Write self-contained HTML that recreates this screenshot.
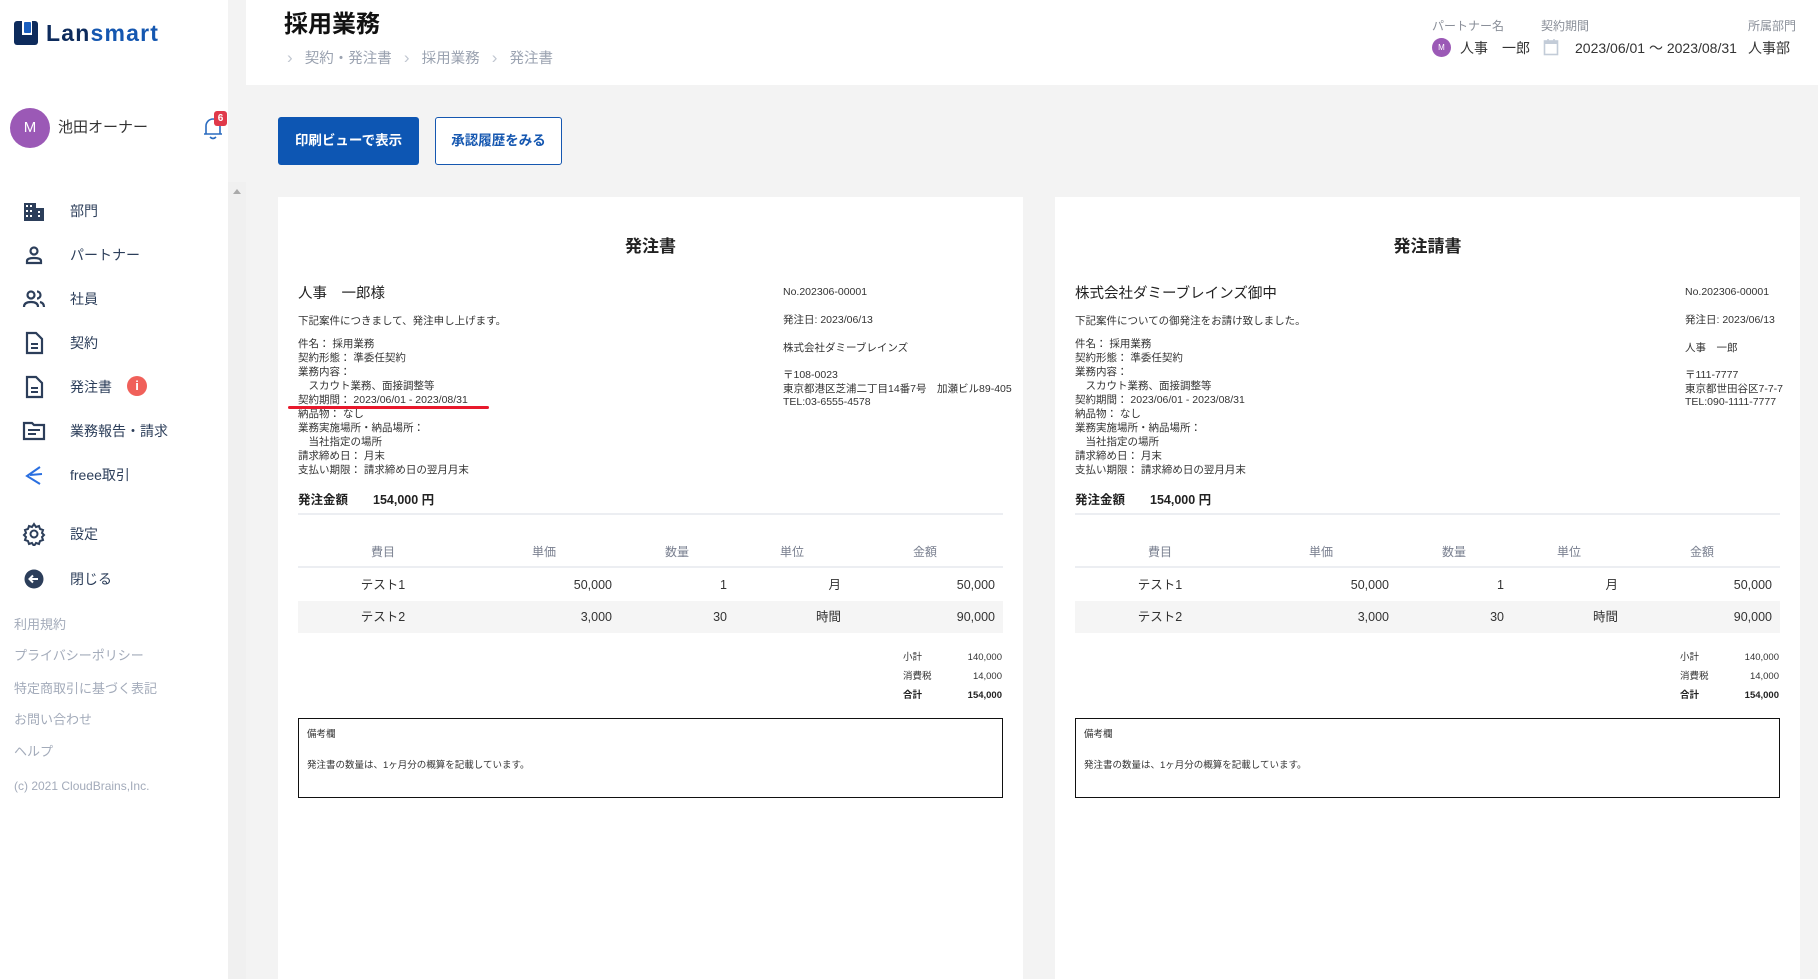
<!DOCTYPE html>
<html><head><meta charset="utf-8"><style>
*{margin:0;padding:0;box-sizing:border-box}
html{overflow:hidden;width:1818px;height:979px}
body{width:1818px;height:979px;overflow:hidden;background:#f3f3f3;font-family:"Liberation Sans","Noto Sans CJK JP",sans-serif;color:#222;position:relative}
.a{position:absolute;white-space:nowrap}
#side{position:absolute;left:0;top:0;width:228px;height:979px;background:#fff}
#sb{position:absolute;left:228px;top:182px;width:18px;height:797px;background:#f0f0f0}
#hdr{position:absolute;left:246px;top:0;width:1572px;height:85px;background:#fff}
.nav{position:absolute;left:70px;font-size:14px;color:#2c3e5a;line-height:20px}
.ico{position:absolute;left:22px;width:24px;height:24px}
.ft{position:absolute;left:14px;font-size:13px;color:#a3abba;line-height:18px}
.card{position:absolute;top:197px;width:745px;height:782px;background:#fff}
.card .a{line-height:16px}
.s{font-size:10.5px;color:#333}
.th{font-size:12px;color:#7a8090}
.td{font-size:12.5px;color:#333}
.ch{color:#c0c6d0;font-size:17px}
</style></head><body>
<div id="side">
 <div class="a" style="left:14px;top:21px;width:24px;height:24px;background:#0d2b5c;border-radius:3px"></div>
 <div class="a" style="left:22px;top:21px;width:10px;height:14px;background:#fff"></div>
 <div class="a" style="left:24px;top:22px;width:7px;height:11px;background:#1a5fc0;border-radius:1px"></div>
 <div class="a" style="left:46px;top:19px;font-size:23px;font-weight:bold;color:#0d2b5c;line-height:28px;letter-spacing:1.2px">Lan<span style="color:#1557b0">smart</span></div>
 <div class="a" style="left:10px;top:108px;width:40px;height:40px;border-radius:50%;background:#9b59b6;color:#fff;font-size:15px;line-height:40px;text-align:center">M</div>
 <div class="a" style="left:58px;top:118px;font-size:15px;color:#333;line-height:20px">池田オーナー</div>
 <svg class="a" style="left:202px;top:114px" width="22" height="28" viewBox="0 0 22 28"><path d="M4 20 V12 a7 7 0 0 1 14 0 V20 H4 Z M2 20 H20" fill="none" stroke="#2a6bbf" stroke-width="1.6"/><path d="M8 23 q3 3 6 0" fill="none" stroke="#2a6bbf" stroke-width="1.6"/></svg>
 <div class="a" style="left:214px;top:111px;width:13px;height:15px;background:#e0394a;border-radius:3px;color:#fff;font-size:10px;font-weight:bold;text-align:center;line-height:15px">6</div>

 <svg class="ico" style="top:200px" viewBox="0 0 24 24"><rect x="2" y="3" width="12" height="18" fill="#2c3e5a"/><rect x="14" y="8" width="8" height="13" fill="#2c3e5a"/><g fill="#fff"><rect x="4" y="5" width="2" height="2"/><rect x="8" y="5" width="2" height="2"/><rect x="4" y="10" width="2" height="2"/><rect x="8" y="10" width="2" height="2"/><rect x="4" y="15" width="2" height="2"/><rect x="8" y="15" width="2" height="2"/><rect x="16" y="11" width="2" height="2"/><rect x="16" y="15" width="2" height="2"/></g></svg>
 <div class="nav" style="top:201px">部門</div>
 <svg class="ico" style="top:243px" viewBox="0 0 24 24"><circle cx="12" cy="8" r="3.5" fill="none" stroke="#2c3e5a" stroke-width="2.2"/><path d="M5 20 v-2 q0-3 7-3 q7 0 7 3 v2 Z" fill="none" stroke="#2c3e5a" stroke-width="2.2"/></svg>
 <div class="nav" style="top:245px">パートナー</div>
 <svg class="ico" style="top:287px" viewBox="0 0 24 24"><circle cx="9" cy="8" r="3.5" fill="none" stroke="#2c3e5a" stroke-width="2.2"/><path d="M2 20 q0-5 7-5 q7 0 7 5" fill="none" stroke="#2c3e5a" stroke-width="2.2"/><path d="M15 4.5 a3.5 3.5 0 0 1 0 7 M18 15 q4 1 4 5" fill="none" stroke="#2c3e5a" stroke-width="2.2"/></svg>
 <div class="nav" style="top:289px">社員</div>
 <svg class="ico" style="top:331px" viewBox="0 0 24 24"><path d="M5 2 H14 L20 8 V22 H5 Z" fill="none" stroke="#2c3e5a" stroke-width="2.2"/><path d="M9 13 H16 M9 17 H16" stroke="#2c3e5a" stroke-width="2"/></svg>
 <div class="nav" style="top:333px">契約</div>
 <svg class="ico" style="top:375px" viewBox="0 0 24 24"><path d="M5 2 H14 L20 8 V22 H5 Z" fill="none" stroke="#2c3e5a" stroke-width="2.2"/><path d="M9 13 H16 M9 17 H16" stroke="#2c3e5a" stroke-width="2"/></svg>
 <div class="nav" style="top:377px">発注書</div>
 <div class="a" style="left:127px;top:376px;width:20px;height:20px;border-radius:50%;background:#f0605a;color:#fff;font-size:13px;font-weight:bold;text-align:center;line-height:20px">i</div>
 <svg class="ico" style="top:419px" viewBox="0 0 24 24"><path d="M2 4 H10 L12 6 H22 V20 H2 Z" fill="none" stroke="#2c3e5a" stroke-width="2.2"/><path d="M6 11 H18 M6 15 H14" stroke="#2c3e5a" stroke-width="2"/></svg>
 <div class="nav" style="top:421px">業務報告・請求</div>
 <svg class="ico" style="top:463px" viewBox="0 0 24 24"><path d="M18 4 L5 13 L18 21 M8 12 L20 11" fill="none" stroke="#2a6fe0" stroke-width="2"/></svg>
 <div class="nav" style="top:465px">freee取引</div>
 <svg class="ico" style="top:522px" viewBox="0 0 24 24"><circle cx="12" cy="12" r="3.5" fill="none" stroke="#2c3e5a" stroke-width="2"/><path d="M12 2 l2 3 3-1 1 3 3 1-1 3 2 2-2 2 1 3-3 1-1 3-3-1-2 3-2-3-3 1-1-3-3-1 1-3-2-2 2-2-1-3 3-1 1-3 3 1 Z" fill="none" stroke="#2c3e5a" stroke-width="2"/></svg>
 <div class="nav" style="top:524px">設定</div>
 <svg class="ico" style="top:567px" viewBox="0 0 24 24"><circle cx="12" cy="12" r="9.5" fill="#2c3e5a"/><path d="M16 12 H8 M11 8.5 L7.5 12 L11 15.5" fill="none" stroke="#fff" stroke-width="2"/></svg>
 <div class="nav" style="top:569px">閉じる</div>

 <div class="ft" style="top:616px">利用規約</div>
 <div class="ft" style="top:647px">プライバシーポリシー</div>
 <div class="ft" style="top:680px">特定商取引に基づく表記</div>
 <div class="ft" style="top:711px">お問い合わせ</div>
 <div class="ft" style="top:743px">ヘルプ</div>
 <div class="ft" style="top:777px;font-size:12px">(c) 2021 CloudBrains,Inc.</div>
</div>
<div id="sb"><div style="margin:7px auto 0;width:0;height:0;border-left:4px solid transparent;border-right:4px solid transparent;border-bottom:5px solid #aaa"></div></div>

<div id="hdr"></div>
<div class="a" style="left:284px;top:9px;font-size:24px;font-weight:bold;line-height:32px;color:#111">採用業務</div>
<div class="a" style="left:287px;top:48px;font-size:14.5px;line-height:20px;color:#9aa2b0"><span class="ch">›</span>&nbsp;&nbsp;&nbsp;契約・発注書&nbsp;&nbsp;&nbsp;<span class="ch">›</span>&nbsp;&nbsp;&nbsp;採用業務&nbsp;&nbsp;&nbsp;<span class="ch">›</span>&nbsp;&nbsp;&nbsp;発注書</div>

<div class="a" style="left:1432px;top:18px;font-size:12px;color:#8a8f99;line-height:16px">パートナー名</div>
<div class="a" style="left:1541px;top:18px;font-size:12px;color:#8a8f99;line-height:16px">契約期間</div>
<div class="a" style="left:1748px;top:18px;font-size:12px;color:#8a8f99;line-height:16px">所属部門</div>
<div class="a" style="left:1432px;top:38px;width:19px;height:19px;border-radius:50%;background:#9b59b6;color:#fff;font-size:8px;text-align:center;line-height:19px">M</div>
<div class="a" style="left:1460px;top:38px;font-size:14px;line-height:20px;color:#333">人事　一郎</div>
<svg class="a" style="left:1543px;top:38px" width="16" height="18" viewBox="0 0 16 18"><rect x="1.5" y="3" width="13" height="13.5" fill="none" stroke="#c3ccd8" stroke-width="1.6"/><rect x="1.5" y="3" width="13" height="3" fill="#c3ccd8"/><path d="M5 1 V4 M11 1 V4" stroke="#c3ccd8" stroke-width="1.6"/></svg>
<div class="a" style="left:1575px;top:38px;font-size:14px;line-height:20px;color:#333">2023/06/01 ～ 2023/08/31</div>
<div class="a" style="left:1748px;top:38px;font-size:14px;line-height:20px;color:#333">人事部</div>

<div class="a" style="left:278px;top:117px;width:141px;height:48px;background:#0d56b3;border-radius:3px;color:#fff;font-size:13.5px;font-weight:bold;text-align:center;line-height:48px">印刷ビューで表示</div>
<div class="a" style="left:435px;top:117px;width:127px;height:48px;background:#fff;border:1.5px solid #1557b0;border-radius:3px;color:#1557b0;font-size:13.5px;font-weight:bold;text-align:center;line-height:45px">承認履歴をみる</div>

<!-- CARD 1 -->
<div class="card" style="left:278px">
 <div class="a" style="left:0;width:745px;text-align:center;top:40px;font-size:17px;font-weight:bold;line-height:20px">発注書</div>
 <div class="a" style="left:20px;top:88px;font-size:14.5px;line-height:18px">人事　一郎様</div>
 <div class="a s" style="left:20px;top:116px">下記案件につきまして、発注申し上げます。</div>
 <div class="a s" style="left:20px;top:140px;line-height:14px;white-space:pre">件名： 採用業務
契約形態： 準委任契約
業務内容：
　スカウト業務、面接調整等
契約期間： 2023/06/01 - 2023/08/31
納品物： なし
業務実施場所・納品場所：
　当社指定の場所
請求締め日： 月末
支払い期限： 請求締め日の翌月月末</div>
 <div class="a" style="left:10px;top:209px;width:201px;height:3px;background:#e8192c;border-radius:2px"></div>
 <div class="a" style="left:20px;top:295px;font-size:12.5px;font-weight:bold">発注金額　　154,000 円</div>
 <div class="a" style="left:20px;top:316px;width:705px;height:2px;background:#eceef2"></div>
 <div class="a s" style="left:505px;top:87px">No.202306-00001</div>
 <div class="a s" style="left:505px;top:115px">発注日: 2023/06/13</div>
 <div class="a s" style="left:505px;top:143px">株式会社ダミーブレインズ</div>
 <div class="a s" style="left:505px;top:172px;line-height:13.5px;white-space:pre">〒108-0023
東京都港区芝浦二丁目14番7号　加瀬ビル89-405
TEL:03-6555-4578</div>
 <div class="a th" style="left:65px;width:80px;text-align:center;top:347px">費目</div>
 <div class="a th" style="left:226px;width:80px;text-align:center;top:347px">単価</div>
 <div class="a th" style="left:359px;width:80px;text-align:center;top:347px">数量</div>
 <div class="a th" style="left:474px;width:80px;text-align:center;top:347px">単位</div>
 <div class="a th" style="left:607px;width:80px;text-align:center;top:347px">金額</div>
 <div class="a" style="left:20px;top:369px;width:705px;height:2px;background:#eceef2"></div>
 <div class="a" style="left:20px;top:404px;width:705px;height:32px;background:#f5f5f5"></div>
 <div class="a td" style="left:65px;width:80px;text-align:center;top:380px">テスト1</div>
 <div class="a td" style="left:234px;width:100px;text-align:right;top:380px">50,000</div>
 <div class="a td" style="left:349px;width:100px;text-align:right;top:380px">1</div>
 <div class="a td" style="left:463px;width:100px;text-align:right;top:380px">月</div>
 <div class="a td" style="left:617px;width:100px;text-align:right;top:380px">50,000</div>
 <div class="a td" style="left:65px;width:80px;text-align:center;top:412px">テスト2</div>
 <div class="a td" style="left:234px;width:100px;text-align:right;top:412px">3,000</div>
 <div class="a td" style="left:349px;width:100px;text-align:right;top:412px">30</div>
 <div class="a td" style="left:463px;width:100px;text-align:right;top:412px">時間</div>
 <div class="a td" style="left:617px;width:100px;text-align:right;top:412px">90,000</div>
 <div class="a" style="left:625px;top:453px;font-size:9.5px;color:#333">小計</div>
 <div class="a" style="left:625px;top:472px;font-size:9.5px;color:#333">消費税</div>
 <div class="a" style="left:625px;top:491px;font-size:9.5px;font-weight:bold">合計</div>
 <div class="a" style="left:624px;width:100px;text-align:right;top:453px;font-size:9.5px;color:#333">140,000</div>
 <div class="a" style="left:624px;width:100px;text-align:right;top:472px;font-size:9.5px;color:#333">14,000</div>
 <div class="a" style="left:624px;width:100px;text-align:right;top:491px;font-size:9.5px;font-weight:bold">154,000</div>
 <div class="a" style="left:20px;top:521px;width:705px;height:80px;border:1.3px solid #111"></div>
 <div class="a" style="left:29px;top:530px;font-size:9.5px;color:#333">備考欄</div>
 <div class="a" style="left:29px;top:561px;font-size:9.5px;color:#333">発注書の数量は、1ヶ月分の概算を記載しています。</div>
</div>

<!-- CARD 2 -->
<div class="card" style="left:1055px">
 <div class="a" style="left:0;width:745px;text-align:center;top:40px;font-size:17px;font-weight:bold;line-height:20px">発注請書</div>
 <div class="a" style="left:20px;top:88px;font-size:14.5px;line-height:18px">株式会社ダミーブレインズ御中</div>
 <div class="a s" style="left:20px;top:116px">下記案件についての御発注をお請け致しました。</div>
 <div class="a s" style="left:20px;top:140px;line-height:14px;white-space:pre">件名： 採用業務
契約形態： 準委任契約
業務内容：
　スカウト業務、面接調整等
契約期間： 2023/06/01 - 2023/08/31
納品物： なし
業務実施場所・納品場所：
　当社指定の場所
請求締め日： 月末
支払い期限： 請求締め日の翌月月末</div>
 <div class="a" style="left:20px;top:295px;font-size:12.5px;font-weight:bold">発注金額　　154,000 円</div>
 <div class="a" style="left:20px;top:316px;width:705px;height:2px;background:#eceef2"></div>
 <div class="a s" style="left:630px;top:87px">No.202306-00001</div>
 <div class="a s" style="left:630px;top:115px">発注日: 2023/06/13</div>
 <div class="a s" style="left:630px;top:143px">人事　一郎</div>
 <div class="a s" style="left:630px;top:172px;line-height:13.5px;white-space:pre">〒111-7777
東京都世田谷区7-7-7
TEL:090-1111-7777</div>
 <div class="a th" style="left:65px;width:80px;text-align:center;top:347px">費目</div>
 <div class="a th" style="left:226px;width:80px;text-align:center;top:347px">単価</div>
 <div class="a th" style="left:359px;width:80px;text-align:center;top:347px">数量</div>
 <div class="a th" style="left:474px;width:80px;text-align:center;top:347px">単位</div>
 <div class="a th" style="left:607px;width:80px;text-align:center;top:347px">金額</div>
 <div class="a" style="left:20px;top:369px;width:705px;height:2px;background:#eceef2"></div>
 <div class="a" style="left:20px;top:404px;width:705px;height:32px;background:#f5f5f5"></div>
 <div class="a td" style="left:65px;width:80px;text-align:center;top:380px">テスト1</div>
 <div class="a td" style="left:234px;width:100px;text-align:right;top:380px">50,000</div>
 <div class="a td" style="left:349px;width:100px;text-align:right;top:380px">1</div>
 <div class="a td" style="left:463px;width:100px;text-align:right;top:380px">月</div>
 <div class="a td" style="left:617px;width:100px;text-align:right;top:380px">50,000</div>
 <div class="a td" style="left:65px;width:80px;text-align:center;top:412px">テスト2</div>
 <div class="a td" style="left:234px;width:100px;text-align:right;top:412px">3,000</div>
 <div class="a td" style="left:349px;width:100px;text-align:right;top:412px">30</div>
 <div class="a td" style="left:463px;width:100px;text-align:right;top:412px">時間</div>
 <div class="a td" style="left:617px;width:100px;text-align:right;top:412px">90,000</div>
 <div class="a" style="left:625px;top:453px;font-size:9.5px;color:#333">小計</div>
 <div class="a" style="left:625px;top:472px;font-size:9.5px;color:#333">消費税</div>
 <div class="a" style="left:625px;top:491px;font-size:9.5px;font-weight:bold">合計</div>
 <div class="a" style="left:624px;width:100px;text-align:right;top:453px;font-size:9.5px;color:#333">140,000</div>
 <div class="a" style="left:624px;width:100px;text-align:right;top:472px;font-size:9.5px;color:#333">14,000</div>
 <div class="a" style="left:624px;width:100px;text-align:right;top:491px;font-size:9.5px;font-weight:bold">154,000</div>
 <div class="a" style="left:20px;top:521px;width:705px;height:80px;border:1.3px solid #111"></div>
 <div class="a" style="left:29px;top:530px;font-size:9.5px;color:#333">備考欄</div>
 <div class="a" style="left:29px;top:561px;font-size:9.5px;color:#333">発注書の数量は、1ヶ月分の概算を記載しています。</div>
</div>
</body></html>
